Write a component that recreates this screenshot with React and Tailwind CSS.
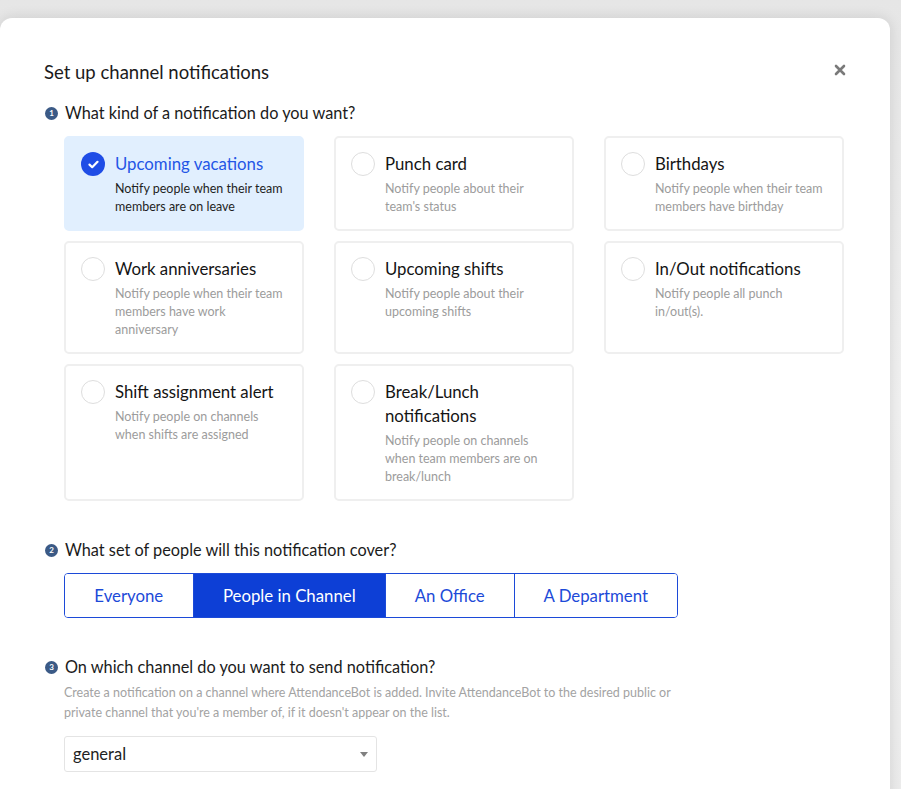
import React from "react";

const CARDS = [
  { title: "Upcoming vacations", desc: "Notify people when their team members are on leave", checked: true },
  { title: "Punch card", desc: "Notify people about their team's status" },
  { title: "Birthdays", desc: "Notify people when their team members have birthday" },
  { title: "Work anniversaries", desc: "Notify people when their team members have work anniversary" },
  { title: "Upcoming shifts", desc: "Notify people about their upcoming shifts" },
  { title: "In/Out notifications", desc: "Notify people all punch in/out(s)." },
  { title: "Shift assignment alert", desc: "Notify people on channels when shifts are assigned" },
  { title: "Break/Lunch notifications", desc: "Notify people on channels when team members are on break/lunch" },
];

const SEGMENTS = [
  { label: "Everyone", w: "w-[128px]" },
  { label: "People in Channel", w: "w-[193px]", active: true },
  { label: "An Office", w: "w-[129px]" },
  { label: "A Department", w: "w-[164px]" },
];

function StepHeading({ n, children, className = "" }) {
  return (
    <div className={"flex items-center h-[22px] " + className}>
      <span className="w-[13px] h-[13px] rounded-full bg-[#3b5a86] text-white text-[8px] font-bold flex items-center justify-center mr-[7px] ml-[1px]">
        {n}
      </span>
      <span className="text-[16.3px] text-[#1b1b1b]">{children}</span>
    </div>
  );
}

function Card({ title, desc, checked }) {
  return (
    <div
      className={
        "rounded-[5px] border-2 pt-[14px] pb-[13px] pl-[15px] pr-[10px] flex " +
        (checked ? "bg-[#e1effe] border-[#e1effe]" : "bg-white border-[#efefef]")
      }
    >
      {checked ? (
        <span className="w-[24px] h-[24px] rounded-full bg-[#1f4de6] flex items-center justify-center shrink-0">
          <svg width="11" height="9" viewBox="0 0 11 9" fill="none">
            <path d="M1.5 4.6 L4.2 7.2 L9.5 1.8" stroke="white" strokeWidth="2.2" strokeLinecap="round" strokeLinejoin="round" />
          </svg>
        </span>
      ) : (
        <span className="w-[24px] h-[24px] rounded-full border border-[#dedede] bg-white shrink-0" />
      )}
      <div className="ml-[10px] w-[180px]">
        <div className={"text-[16.8px] leading-6 " + (checked ? "text-[#2456e6]" : "text-[#141414]")}>{title}</div>
        <div
          className={
            "mt-[4px] w-[172px] text-[12.5px] leading-[18px] " + (checked ? "text-[#1f1f1f]" : "text-[#9c9c9c]")
          }
        >
          {desc}
        </div>
      </div>
    </div>
  );
}

export default function App() {
  return (
    <div
      className="min-h-[789px] bg-gradient-to-b from-[#e6e6e6] via-[#f1f1f1] to-[#ececec] overflow-hidden"
      style={{ fontFamily: "Lato, 'Noto Sans', sans-serif" }}
    >
      <div className="mt-[18px] w-[890px] h-[790px] bg-white rounded-t-[12px] shadow-[0_0_14px_rgba(0,0,0,0.12)] px-[44px] pt-[42px]">
        <div className="flex items-center justify-between h-[26px]">
          <h1 className="text-[18.5px] text-[#1b1b1b]">Set up channel notifications</h1>
          <svg width="12" height="12" viewBox="0 0 12 12" className="-mt-[6px]">
            <path d="M2 2 L10 10 M10 2 L2 10" stroke="#7a7a7a" strokeWidth="2.6" strokeLinecap="round" />
          </svg>
        </div>

        <StepHeading n="1" className="mt-[16px]">What kind of a notification do you want?</StepHeading>

        <div className="ml-[20px] mt-[12px] grid grid-cols-[240px_240px_240px] gap-x-[30px] gap-y-[10px]">
          {CARDS.map((c) => (
            <Card key={c.title} {...c} />
          ))}
        </div>

        <StepHeading n="2" className="mt-[38px]">What set of people will this notification cover?</StepHeading>

        <div className="ml-[20px] mt-[12px] flex h-[45px] w-[614px] border border-[#1c4ad8] rounded-[4px] overflow-hidden">
          {SEGMENTS.map((s, i) => (
            <div
              key={s.label}
              className={
                s.w +
                " flex items-center justify-center text-[16.8px] " +
                (i > 0 ? "border-l border-[#1c4ad8] " : "") +
                (s.active ? "bg-[#0d3fd6] text-white" : "bg-white text-[#1c4ad8]")
              }
            >
              {s.label}
            </div>
          ))}
        </div>

        <StepHeading n="3" className="mt-[38px]">On which channel do you want to send notification?</StepHeading>

        <p className="ml-[20px] mt-[5px] text-[12.5px] leading-[20px] text-[#a3a3a3]">
          Create a notification on a channel where AttendanceBot is added. Invite AttendanceBot to the desired public or
          <br />
          private channel that you're a member of, if it doesn't appear on the list.
        </p>

        <div className="ml-[20px] mt-[13px] w-[313px] h-[36px] border border-[#e4e4e4] rounded-[3px] flex items-center justify-between pl-[8px] pr-[8px]">
          <span className="text-[16.5px] text-[#222]">general</span>
          <svg width="8" height="5" viewBox="0 0 8 5">
            <path d="M0 0 H8 L4 5 Z" fill="#808080" />
          </svg>
        </div>
      </div>
    </div>
  );
}
